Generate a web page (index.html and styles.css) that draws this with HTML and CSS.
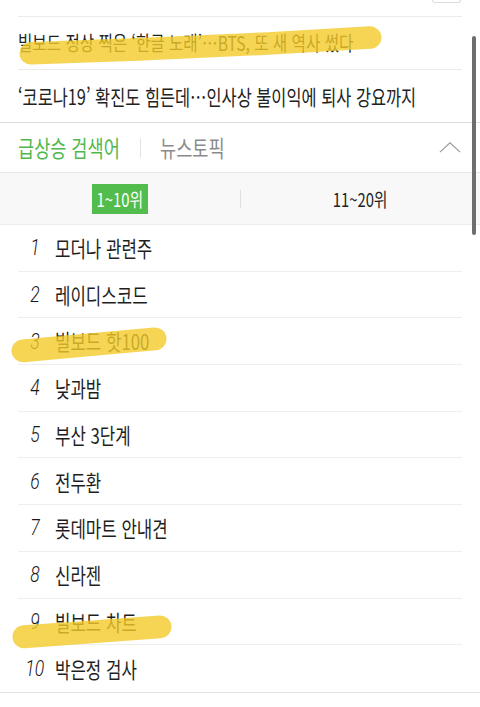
FILE: index.html
```html
<!DOCTYPE html>
<html lang="ko">
<head>
<meta charset="utf-8">
<title>급상승 검색어</title>
<link rel="stylesheet" href="styles.css">
</head>
<body>
<div class="page">
  <div class="topbar"><span class="topbtn"></span></div>

  <ul class="news">
    <li class="news-item">
      <span class="sq">빌보드 정상 찍은 ‘한글 노래’…BTS, 또 새 역사 썼다</span>
      <svg class="mark" viewBox="0 0 444 53" preserveAspectRatio="none"><path d="M13 37 L120 33 L250 27 L352 21" /></svg>
    </li>
    <li class="news-item news-wide">
      <span class="sq">‘코로나19’ 확진도 힘든데…인사상 불이익에 퇴사 강요까지</span>
    </li>
  </ul>

  <div class="tabs">
    <div class="tab tab-hot"><span class="sq">급상승 검색어</span></div>
    <span class="tab-div"></span>
    <div class="tab tab-news"><span class="sq">뉴스토픽</span></div>
    <svg class="chevron" viewBox="0 0 24 12"><polyline points="1,11 12,1 23,11" /></svg>
  </div>

  <div class="range">
    <div class="range-half"><span class="pill"><span class="sqc">1~10위</span></span></div>
    <span class="range-div"></span>
    <div class="range-half"><span class="sqc range-text">11~20위</span></div>
  </div>

  <ol class="rank">
    <li class="rank-item"><span class="num"><span class="numt">1</span></span><span class="sq">모더나 관련주</span></li>
    <li class="rank-item"><span class="num"><span class="numt">2</span></span><span class="sq">레이디스코드</span></li>
    <li class="rank-item"><span class="num"><span class="numt">3</span></span><span class="sq">빌보드 핫100</span>
      <svg class="mark" viewBox="0 0 444 46" preserveAspectRatio="none"><path d="M5 33 L70 27 L137 21" /></svg>
    </li>
    <li class="rank-item"><span class="num"><span class="numt">4</span></span><span class="sq">낮과밤</span></li>
    <li class="rank-item"><span class="num"><span class="numt">5</span></span><span class="sq">부산 3단계</span></li>
    <li class="rank-item"><span class="num"><span class="numt">6</span></span><span class="sq">전두환</span></li>
    <li class="rank-item"><span class="num"><span class="numt">7</span></span><span class="sq">롯데마트 안내견</span></li>
    <li class="rank-item"><span class="num"><span class="numt">8</span></span><span class="sq">신라젠</span></li>
    <li class="rank-item"><span class="num"><span class="numt">9</span></span><span class="sq">빌보드 차트</span>
      <svg class="mark" viewBox="0 0 444 46" preserveAspectRatio="none"><path d="M6 38 L60 34 L142 28" /></svg>
    </li>
    <li class="rank-item"><span class="num"><span class="numt">10</span></span><span class="sq">박은정 검사</span></li>
  </ol>

  <div class="scrollbar"></div>
</div>
</body>
</html>
```

FILE: styles.css
```css
html, body {
  margin: 0;
  padding: 0;
  background: #fff;
}

body {
  font-family: "Noto Sans CJK KR", "Noto Sans", sans-serif;
  color: #222;
}

.page {
  position: relative;
  width: 480px;
  height: 707px;
  overflow: hidden;
  background: #fff;
}

/* condensed text */
.sq {
  display: inline-block;
  white-space: nowrap;
  transform: scaleX(0.78);
  transform-origin: left center;
  line-height: 1;
}

.sqc {
  display: inline-block;
  white-space: nowrap;
  transform: scaleX(0.78);
  transform-origin: center center;
  line-height: 1;
}

/* top */
.topbar {
  height: 16px;
  display: flex;
  justify-content: flex-end;
  align-items: flex-start;
  padding-right: 19px;
}

.topbtn {
  display: block;
  width: 27px;
  height: 2px;
  border: 1px solid #dcdcdc;
  border-top: 0;
  border-radius: 0 0 3px 3px;
}

/* news */
.news {
  list-style: none;
  margin: 0;
  padding: 0 18px;
}

.news-item {
  position: relative;
  box-sizing: border-box;
  height: 53px;
  border-top: 1px solid #ebebeb;
  display: flex;
  align-items: center;
  font-size: 20px;
  color: #222;
}

.news-wide {
  font-size: 21px;
}

.mark {
  position: absolute;
  left: 0;
  top: 0;
  width: 100%;
  height: 100%;
  overflow: visible;
  pointer-events: none;
}

.mark path {
  fill: none;
  stroke: rgba(243, 202, 40, 0.8);
  stroke-width: 23;
  stroke-linecap: round;
  stroke-linejoin: round;
}

/* tabs */
.tabs {
  box-sizing: border-box;
  height: 50px;
  border-top: 1px solid #dedede;
  display: flex;
  align-items: center;
  padding: 0 19px 0 18px;
  font-size: 22.5px;
}

.tab {
  display: flex;
  align-items: center;
}

.tab-hot {
  width: 122px;
  color: #4fb84d;
}

.tab-div {
  width: 1px;
  height: 20px;
  background: #e3e3e3;
}

.tab-news {
  padding-left: 19px;
  color: #8a8a8a;
}

.chevron {
  margin-left: auto;
  width: 22px;
  height: 11px;
}

.chevron polyline {
  fill: none;
  stroke: #9a9a9a;
  stroke-width: 1.3;
}

/* range */
.range {
  box-sizing: border-box;
  height: 53px;
  border-top: 1px solid #e6e6e6;
  border-bottom: 1px solid #ececec;
  background: #f8f8f8;
  display: flex;
  align-items: center;
}

.range-half {
  flex: 1;
  display: flex;
  justify-content: center;
  align-items: center;
}

.range-div {
  width: 1px;
  height: 18px;
  background: #e0e0e0;
}

.pill {
  width: 56px;
  height: 30px;
  background: #52bd4c;
  color: #fff;
  font-size: 19px;
  display: flex;
  justify-content: center;
  align-items: center;
}

.range-text {
  font-size: 19px;
  color: #222;
}

/* rank list */
.rank {
  list-style: none;
  margin: 0;
  padding: 0 18px;
  border-bottom: 1px solid #e2e2e2;
}

.rank-item {
  position: relative;
  box-sizing: border-box;
  height: 46.7px;
  border-bottom: 1px solid #eeeeee;
  display: flex;
  align-items: center;
  font-size: 21.5px;
  color: #1e1e1e;
}

.rank-item:last-child {
  border-bottom: 0;
}

.num {
  width: 34px;
  margin-right: 3px;
  text-align: center;
  font-family: Roboto, "Liberation Sans", sans-serif;
  font-style: italic;
  font-weight: 300;
  font-size: 22px;
  color: #1a1a1a;
}

.numt {
  display: inline-block;
  transform: scaleX(0.8);
  transform-origin: center center;
  line-height: 1;
}

/* scrollbar overlay */
.scrollbar {
  position: absolute;
  right: 4px;
  top: 36px;
  width: 4px;
  height: 199px;
  border-radius: 2px;
  background: #6e6e6e;
}
```
